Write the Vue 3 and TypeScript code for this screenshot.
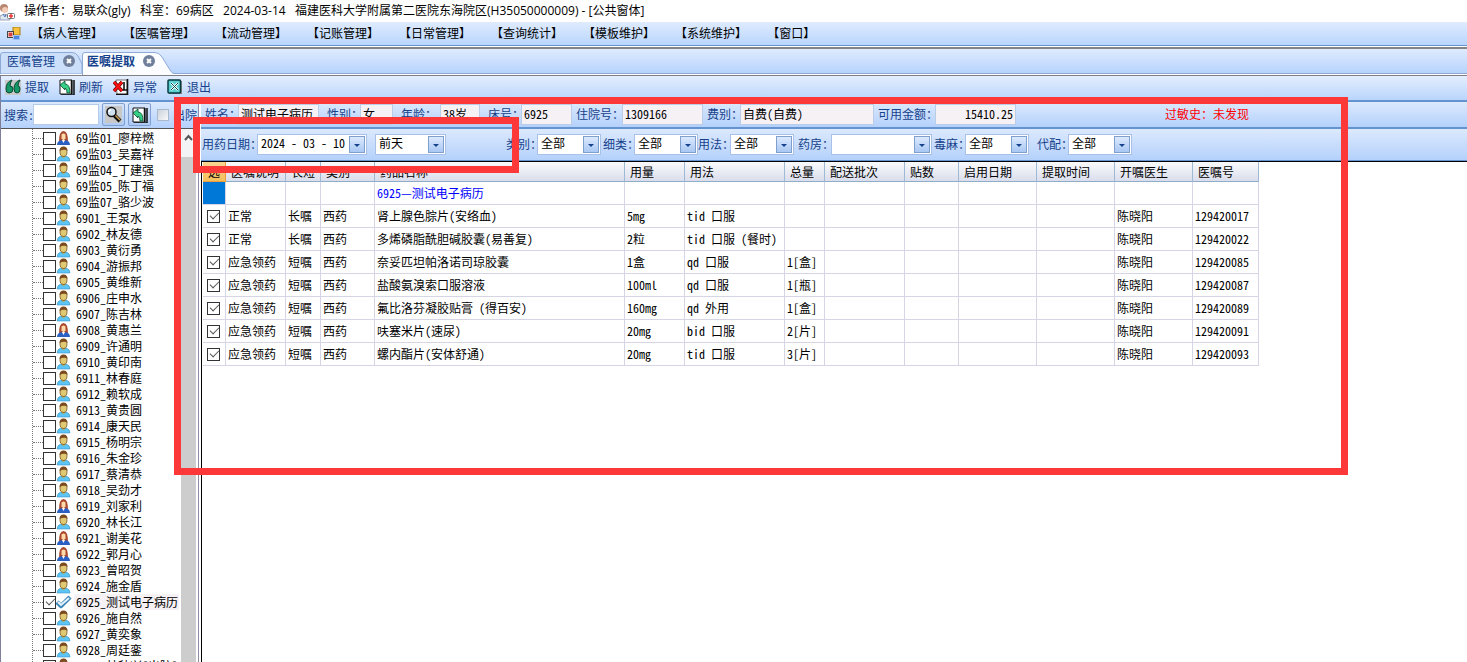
<script setup lang="ts">
import { ref } from 'vue'

interface Patient { name: string; female?: boolean; active?: boolean }
interface Order {
  note: string; term: string; name: string; dose: string; usage: string; total: string; id: string
}

const menus = ['病人管理', '医嘱管理', '流动管理', '记账管理', '日常管理', '查询统计', '模板维护', '系统维护', '窗口']

const patients = ref<Patient[]>([
  { name: '69监01_廖梓燃', female: true },
  { name: '69监03_吴嘉祥' },
  { name: '69监04_丁建强' },
  { name: '69监05_陈丁福' },
  { name: '69监07_骆少波' },
  { name: '6901_王泵水' },
  { name: '6902_林友德' },
  { name: '6903_黄衍勇' },
  { name: '6904_游振邦' },
  { name: '6905_黄维新' },
  { name: '6906_庄申水' },
  { name: '6907_陈吉林' },
  { name: '6908_黄惠兰', female: true },
  { name: '6909_许通明' },
  { name: '6910_黄印南' },
  { name: '6911_林春庭' },
  { name: '6912_赖软成' },
  { name: '6913_黄贵圆' },
  { name: '6914_康天民' },
  { name: '6915_杨明宗' },
  { name: '6916_朱金珍' },
  { name: '6917_蔡清恭' },
  { name: '6918_吴劲才' },
  { name: '6919_刘家利', female: true },
  { name: '6920_林长江' },
  { name: '6921_谢美花', female: true },
  { name: '6922_郭月心', female: true },
  { name: '6923_曾昭贺' },
  { name: '6924_施金盾' },
  { name: '6925_测试电子病历', active: true },
  { name: '6926_施自然' },
  { name: '6927_黄奕象' },
  { name: '6928_周廷銮' },
  { name: '6929_林秋兴[出院]' },
])

const fields = [
  { id: 'name', label: '姓名：', value: '测试电子病历' },
  { id: 'sex', label: '性别：', value: '女' },
  { id: 'age', label: '年龄：', value: '38岁' },
  { id: 'bed', label: '床号：', value: '6925' },
  { id: 'inpatient', label: '住院号：', value: '1309166' },
  { id: 'fee', label: '费别：', value: '自费(自费)' },
  { id: 'balance', label: '可用金额：', value: '15410.25' },
]

const filters = [
  { id: 'kind', label: '类别：', value: '全部' },
  { id: 'subkind', label: '细类：', value: '全部' },
  { id: 'usage', label: '用法：', value: '全部' },
  { id: 'pharmacy', label: '药房：', value: '' },
  { id: 'narcotic', label: '毒麻：', value: '全部' },
  { id: 'proxy', label: '代配：', value: '全部' },
]

const heads = ['选', '医嘱说明', '长短', '类别', '药品名称', '用量', '用法', '总量', '配送批次', '贴数', '启用日期', '提取时间', '开嘱医生', '医嘱号']

const orders: Order[] = [
  { note: '正常', term: '长嘱', name: '肾上腺色腙片(安络血)', dose: '5mg', usage: 'tid 口服', total: '', id: '129420017' },
  { note: '正常', term: '长嘱', name: '多烯磷脂酰胆碱胶囊(易善复)', dose: '2粒', usage: 'tid 口服 (餐时)', total: '', id: '129420022' },
  { note: '应急领药', term: '短嘱', name: '奈妥匹坦帕洛诺司琼胶囊', dose: '1盒', usage: 'qd 口服', total: '1[盒]', id: '129420085' },
  { note: '应急领药', term: '短嘱', name: '盐酸氨溴索口服溶液', dose: '100ml', usage: 'qd 口服', total: '1[瓶]', id: '129420087' },
  { note: '应急领药', term: '短嘱', name: '氟比洛芬凝胶贴膏 (得百安)', dose: '160mg', usage: 'qd 外用', total: '1[盒]', id: '129420089' },
  { note: '应急领药', term: '短嘱', name: '呋塞米片(速尿)', dose: '20mg', usage: 'bid 口服', total: '2[片]', id: '129420091' },
  { note: '应急领药', term: '短嘱', name: '螺内酯片(安体舒通)', dose: '20mg', usage: 'tid 口服', total: '3[片]', id: '129420093' },
]
</script>

<template>
  <div class="app">
    <header class="title">
      <svg width="16" height="20" viewBox="0 0 16 20">
        <circle cx="4" cy="7" r="4" fill="#b98673" />
        <circle cx="5" cy="9" r="3" fill="#f3cdb8" />
        <path d="M0 19v-4l4-2 5 2 1 4z" fill="#dfe6f2" stroke="#8492b0" stroke-width=".8" />
        <path d="M3 13l2 3 1-3" fill="none" stroke="#527ab8" />
        <rect x="7.500" y="12.500" width="7" height="5" rx="1" fill="#fff" stroke="#777" />
        <path d="M11 13v4M9 15h4" stroke="#e33" stroke-width="1.500" />
      </svg>
      <span>操作者：易联众(gly)&nbsp;&nbsp; 科室：69病区&nbsp;&nbsp; 2024-03-14&nbsp;&nbsp; 福建医科大学附属第二医院东海院区(H35050000009) - [公共窗体]</span>
    </header>

    <nav class="menu">
      <svg width="14" height="14" viewBox="0 0 14 14">
        <rect x="6" y="0" width="7" height="8" fill="#f7c33c" stroke="#a87b1a" />
        <rect x=".5" y="4.500" width="6" height="6" fill="#fff" stroke="#444" />
        <rect x="1.500" y="5.500" width="4" height="4" fill="#d5443a" />
        <rect x="6.500" y="8.500" width="6" height="4" fill="#4b86df" stroke="#9ec0f5" />
      </svg>
      <button v-for="m in menus" :key="m" type="button">【{{ m }}】</button>
    </nav>

    <div class="tabs">
      <button type="button" class="tab">
        <svg class="shape" width="84" height="22" viewBox="0 0 84 22">
          <path d="M.5 22V3Q.5 .5 3 .5H72Q76 .5 78 4L82 12V22z" fill="#cbdffb" stroke="#8fa9d6" />
        </svg>
        <span>医嘱管理</span>
        <svg class="close" width="12" height="12" viewBox="0 0 12 12"><circle cx="6" cy="6" r="6" fill="#70809c" /><path d="M4 4l4 4M8 4l-4 4" stroke="#fff" stroke-width="2" /></svg>
      </button>
      <button type="button" class="tab current">
        <svg class="shape" width="92" height="23" viewBox="0 0 92 23">
          <path d="M.5 23V3Q.5 .5 3 .5H73Q77 .5 80 5L88 18Q90 21.500 92 21.500V23z" fill="#fbfdff" />
          <path d="M.5 23V3Q.5 .5 3 .5H73Q77 .5 80 5L88 18Q90 21.500 92 21.500" fill="none" stroke="#8fa9d6" />
        </svg>
        <span>医嘱提取</span>
        <svg class="close" width="12" height="12" viewBox="0 0 12 12"><circle cx="6" cy="6" r="6" fill="#70809c" /><path d="M4 4l4 4M8 4l-4 4" stroke="#fff" stroke-width="2" /></svg>
      </button>
    </div>

    <div class="tools">
      <button type="button">
        <svg width="16" height="16" viewBox="0 0 16 16">
          <path d="M0 1h16v15H0z" fill="#c8c8c8" />
          <path d="M7 1Q1 3 1 10q0 4 3 4 4 0 4-4 0-3-3-3 0-3 2-6zM15 1Q9 3 9 10q0 4 3 4 3 0 3-4 0-3-2-3 0-3 2-6z" fill="#159768" stroke="#0a4a36" />
        </svg>提取</button>
      <button type="button">
        <svg width="16" height="16" viewBox="0 0 16 16">
          <path d="M1 1h12v14H1z" fill="#fff" stroke="#111" />
          <path d="M12.500 1v14M15 1v15H2" fill="none" stroke="#111" stroke-width="1.500" />
          <path d="M1 6l5-4v3q5 0 5 9H8q0-5-2-5v2z" fill="#35cf85" stroke="#064a30" stroke-width=".8" />
        </svg>刷新</button>
      <button type="button">
        <svg width="16" height="16" viewBox="0 0 16 16">
          <path d="M3 1h11v14H4z" fill="#fff" stroke="#777" />
          <path d="M14.500 0v15.500H3M9 11h5M11 3v8" fill="none" stroke="#111" stroke-width="1.600" />
          <path d="M1 3l8 9M9 3l-8 9" stroke="#600" stroke-width="3.400" />
          <path d="M1 3l8 9M9 3l-8 9" stroke="#f11" stroke-width="2.200" />
        </svg>异常</button>
      <button type="button">
        <svg width="16" height="16" viewBox="0 0 16 16">
          <path d="M2 2h13v13H2z" fill="#888" />
          <rect x="1" y="1" width="12.500" height="13" rx="1" fill="#57cfd0" stroke="#073c40" stroke-width="1.500" />
          <path d="M4 4l7 7M11 4l-7 7" stroke="#fff" stroke-width="2.400" />
          <path d="M4 4l7 7M11 4l-7 7" stroke="#064a50" />
        </svg>退出</button>
    </div>

    <div class="body">
      <aside class="side">
        <div class="search">
          <label for="search">搜索:</label>
          <input id="search" type="text" />
          <button type="button" aria-label="查找">
            <svg width="17" height="17" viewBox="0 0 17 17">
              <rect width="17" height="17" fill="#c8c8c8" />
              <path d="M9 9l6 6" stroke="#111" stroke-width="4" />
              <path d="M10 9l5 5" stroke="#c99b50" stroke-width="1.500" />
              <circle cx="6.500" cy="6" r="4.500" fill="#cfe0ef" stroke="#111" stroke-width="1.500" />
              <path d="M4 6q0-2 2-2" fill="none" stroke="#fff" stroke-width="1.500" />
            </svg>
          </button>
          <button type="button" aria-label="刷新列表">
            <svg width="16" height="16" viewBox="0 0 16 16">
              <path d="M1 1h12v14H1z" fill="#fff" stroke="#111" />
              <path d="M12.500 1v14M15 1v15H2" fill="none" stroke="#111" stroke-width="1.500" />
              <path d="M1 6l5-4v3q5 0 5 9H8q0-5-2-5v2z" fill="#35cf85" stroke="#064a30" stroke-width=".8" />
            </svg>
          </button>
          <input id="discharged" type="checkbox" class="soft" />
          <label for="discharged">出院</label>
        </div>
        <div class="list">
          <ul class="tree">
            <li v-for="(p, i) in patients" :key="p.name">
              <input :id="'p' + i" type="checkbox" :checked="p.active" />
              <svg v-if="p.active" width="16" height="16" viewBox="0 0 16 16">
                <path d="M1 8l4 4L14 3" fill="none" stroke="#3f86b8" stroke-width="4.500" stroke-linejoin="round" />
                <path d="M2 8l3 3 8-7" fill="none" stroke="#e8f5ff" stroke-width="2" />
              </svg>
              <svg v-else-if="p.female" width="16" height="16" viewBox="0 0 16 16">
                <path d="M3 12Q3 1 7.500 1T12 12z" fill="#a8482c" />
                <path d="M5.500 4.500q2-2 4 0v4l-2 2-2-2z" fill="#ffd9a8" />
                <path d="M1 15q0-4 4.500-5l2 2 2-2Q14 11 14 15z" fill="#2c5fc4" />
                <path d="M6 10l1.500 3L9 10z" fill="#fff" />
              </svg>
              <svg v-else width="16" height="16" viewBox="0 0 16 16">
                <path d="M1 15q0-4 4-5h5q4 1 4 5z" fill="#5cc5f5" stroke="#3a94c8" stroke-width=".6" />
                <path d="M6 9h3v2l-1.500 1L6 11z" fill="#c9a03c" />
                <ellipse cx="7.500" cy="6" rx="3.500" ry="4.500" fill="#e0c874" stroke="#7a5a20" stroke-width=".8" />
                <path d="M3.500 5Q3.500 .5 7.500 .5T11.500 5Q9 2.500 3.500 5z" fill="#7b4a1e" />
              </svg>
              <label :for="'p' + i" :class="{ on: p.active }">{{ p.name }}</label>
            </li>
          </ul>
          <div class="scroll">
            <svg width="15" height="28" viewBox="0 0 15 28"><path d="M4 11l3.500-4L11 11" fill="none" stroke="#555" stroke-width="2" /></svg>
            <div class="thumb"></div>
          </div>
        </div>
      </aside>

      <main class="main">
        <div class="patient">
          <template v-for="f in fields" :key="f.id">
            <label :for="f.id">{{ f.label }}</label>
            <input :id="f.id" type="text" readonly :value="f.value" :class="{ num: f.id === 'balance' }" />
          </template>
          <span class="alert">过敏史：未发现</span>
        </div>

        <div class="filter">
          <label for="date">用药日期：</label>
          <span class="combo">
            <input id="date" type="text" value="2024 - 03 - 10" />
            <i class="drop"></i>
          </span>
          <span class="combo day">
            <select aria-label="日期范围"><option>前天</option></select>
            <i class="drop"></i>
          </span>
          <template v-for="f in filters" :key="f.id">
            <label :for="'f-' + f.id" :class="f.id">{{ f.label }}</label>
            <span class="combo">
              <select :id="'f-' + f.id"><option>{{ f.value }}</option></select>
              <i class="drop"></i>
            </span>
          </template>
        </div>

        <div class="sheet">
          <table>
            <colgroup><col v-for="(h, i) in heads" :key="h" :class="'c' + i" /></colgroup>
            <thead>
              <tr><th v-for="h in heads" :key="h" scope="col">{{ h }}</th></tr>
            </thead>
            <tbody>
              <tr class="group">
                <td></td><td></td><td></td><td></td><td>6925—测试电子病历</td>
                <td v-for="n in 9" :key="n"></td>
              </tr>
              <tr v-for="o in orders" :key="o.id">
                <td><input type="checkbox" checked :aria-label="o.name" /></td>
                <td>{{ o.note }}</td>
                <td>{{ o.term }}</td>
                <td>西药</td>
                <td>{{ o.name }}</td>
                <td>{{ o.dose }}</td>
                <td>{{ o.usage }}</td>
                <td>{{ o.total }}</td>
                <td></td><td></td><td></td><td></td>
                <td>陈晓阳</td>
                <td>{{ o.id }}</td>
              </tr>
            </tbody>
          </table>
        </div>
      </main>
    </div>

    <div class="mark outer"></div>
    <div class="mark inner"></div>
  </div>
</template>

<style>
html, body { margin: 0; height: 100%; overflow: hidden; }
</style>

<style scoped>
* { box-sizing: border-box; }
.app {
  position: relative;
  display: flex;
  flex-direction: column;
  height: 100vh;
  overflow: hidden;
  background: #fff;
  color: #000;
  font: 12px/16px "Noto Sans Mono CJK SC", "Liberation Serif", "Noto Sans CJK SC", sans-serif;
  white-space: nowrap;
}
button, input, select { font: inherit; color: inherit; margin: 0; padding: 0; border: 0; border-radius: 0; background: none; min-width: 0; }
svg { display: block; flex: none; }

.title { flex: none; display: flex; align-items: center; gap: 8px; height: 22px; font-family: "Open Sans", "Noto Sans CJK SC", sans-serif; }
.menu {
  flex: none; display: flex; align-items: center; height: 24px; padding-left: 7px;
  background: linear-gradient(#dfebfe, #b9d6fd); border-bottom: 1px solid #6593cf;
  font-family: "Open Sans", "Noto Sans CJK SC", sans-serif;
}
.menu button { padding: 1px 10px 0; }
.tabs {
  flex: none; display: flex; align-items: flex-end; height: 28px; margin-top: 1px;
  border-top: 2px solid #848484; border-bottom: 1px solid #fff;
  background: linear-gradient(#dfebfe, #b5d2fc); color: #15428b;
  box-shadow: inset 0 -1px #8fa9d6;
}
.tab { position: relative; display: flex; align-items: center; gap: 8px; width: 82px; height: 22px; padding: 0 0 5px 7px; }
.tab span, .tab .close { position: relative; }
.tab.current { width: 92px; padding-left: 5px; font-weight: bold; }
.shape { position: absolute; left: 0; top: 0; }
.tools {
  flex: none; display: flex; align-items: center; height: 25px; padding: 0 0 2px 4px;
  border-top: 1px solid #7f7f88; border-left: 1px solid #7f7f9b;
  background: linear-gradient(#e4eefe, #b9d5fc); color: #15428b;
}
.tools button { display: flex; align-items: center; gap: 4px; width: 54px; }

.body { flex: 1; display: flex; min-height: 0; }
.side { flex: none; display: flex; flex-direction: column; width: 199px; border-left: 1px solid #7f7f9b; border-right: 1px solid #8c8ca8; background: #fff; }
.search, .patient, .filter { flex: none; background: linear-gradient(#dce9fd, #b4d1fc); color: #15428b; }
.search { display: flex; align-items: center; gap: 3px; height: 29px; padding: 0 0 1px 3px; border-top: 2px solid #6593cf; border-bottom: 1px solid #555; overflow: hidden; }
.search label:first-child { flex: none; width: 26px; }
.search input[type="text"] { flex: none; width: 66px; height: 21px; padding: 0 2px; border: 1px solid #b5cbea; background: #fff; }
.search button { display: flex; align-items: center; justify-content: center; flex: none; width: 23px; height: 23px; border: 1px solid #7f9fd0; border-radius: 2px; background: linear-gradient(#d5e5fc, #aecbf5); }
.list { flex: 1; display: flex; min-height: 0; overflow: hidden; }
.tree { flex: 1; margin: 0 0 0 31px; padding: 1px 0 0; list-style: none; border-left: 1px dotted #777; min-width: 0; }
.tree li { display: flex; align-items: center; height: 16px; }
.tree li::before { content: ""; flex: none; width: 10px; border-top: 1px dotted #777; }
.tree label { margin-left: 2px; padding-left: 2px; }
.tree .on { padding-right: 1px; background: #f5f1f5; }
.scroll { flex: none; display: flex; flex-direction: column; width: 15px; margin-right: 2px; background: #f3f2f4; }
.thumb { flex: 1; background: #cdcdcd; }

input[type="checkbox"] { appearance: none; flex: none; display: block; position: relative; width: 13px; height: 13px; border: 1px solid #333; background: #fff; }
input[type="checkbox"]:checked::after { content: ""; position: absolute; left: 2px; top: 1px; width: 8px; height: 4px; border: solid #555; border-width: 0 0 1px 1px; transform: rotate(-45deg); }
.search input.soft { width: 12px; height: 12px; margin: 0 1px 0 3px; border-color: #a9b8cc; background: linear-gradient(135deg, #ccd3dc, #f8f8f8); }

.main { flex: 1; display: flex; flex-direction: column; min-width: 0; margin-left: 2px; }
.patient {
  display: grid; align-items: center; height: 27px; padding: 0 0 1px 1px;
  grid-template-columns: 36px 81px 41px 33px 47px 40px 41px 51px 50px 81px 37px 134px 61px 81px 1fr;
  border-top: 2px solid #6593cf;
}
.patient label { padding-left: 3px; }
.patient label:nth-of-type(n + 2) { padding-left: 8px; }
.patient label:nth-of-type(n + 5) { padding-left: 4px; }
.patient input { position: relative; height: 21px; padding: 0 2px 2px; border: 1px solid #b9cce8; background: #f6f1f5; color: #000; }
.patient input.num { text-align: right; }
.alert { margin-left: 149px; color: #f00; }
.filter {
  display: grid; align-items: center; height: 34px; padding: 0 0 1px 1px;
  grid-template-columns: 55px 110px 8px 71px 91px 64px 33px 64px 32px 64px 37px 101px 33px 64px 39px 64px;
  border-top: 2px solid #6593cf; border-bottom: 1px solid #6593cf;
}
.filter label.kind { padding-left: 60px; }
.filter label.subkind { padding-left: 2px; }
.filter label.pharmacy { padding-left: 4px; }
.filter label.narcotic { padding-left: 2px; }
.filter label.proxy { padding-left: 8px; }
.combo { position: relative; display: flex; height: 21px; border: 1px solid #a9c1e8; background: #fff; color: #000; }
.combo.day { grid-column: 4; }
.combo select, .combo input { appearance: none; flex: 1; width: 100%; padding: 0 18px 2px 3px; }
.drop { position: absolute; right: 1px; top: 1px; width: 16px; height: 17px; border: 1px solid #7f9fcf; background: linear-gradient(#dbe9fe, #a9c8f3); pointer-events: none; }
.drop::after { content: ""; position: absolute; left: 4px; top: 7px; border: 3px solid transparent; border-top-color: #15428b; border-bottom: 0; }

.sheet { flex: 1; border-top: 1px solid #000; border-left: 1px solid #000; padding-left: 1px; min-height: 0; }
table { table-layout: fixed; width: 1056px; border-collapse: separate; border-spacing: 0; }
th { height: 20px; padding: 0 0 0 5px; text-align: left; font-weight: normal; background: linear-gradient(#fafafc, #dadeec); border-right: 1px solid #9db9d3; border-bottom: 1px solid #8facc8; overflow: hidden; }
th:first-child { background: linear-gradient(#f8d493, #f5bf5b); border-color: #ee9d3c; }
td { height: 23px; padding: 0 0 0 2px; border-right: 1px solid #d6d5e6; border-bottom: 1px solid #d6d5e6; }
td:first-child { padding-left: 4px; }
.group td { color: #00f; }
.group td:first-child { background: #0078d7; }
.c0 { width: 23px; } .c1 { width: 60px; } .c2 { width: 35px; } .c3 { width: 54px; } .c4 { width: 250px; }
.c5 { width: 60px; } .c6 { width: 100px; } .c7 { width: 40px; } .c8 { width: 80px; } .c9 { width: 54px; }
.c10, .c11, .c12 { width: 78px; } .c13 { width: 66px; }

.mark { position: absolute; border: 7px solid #fc3838; pointer-events: none; }
.outer { left: 174px; top: 97px; width: 1174px; height: 378px; }
.inner { left: 193px; top: 117px; width: 326px; height: 56px; }
</style>
